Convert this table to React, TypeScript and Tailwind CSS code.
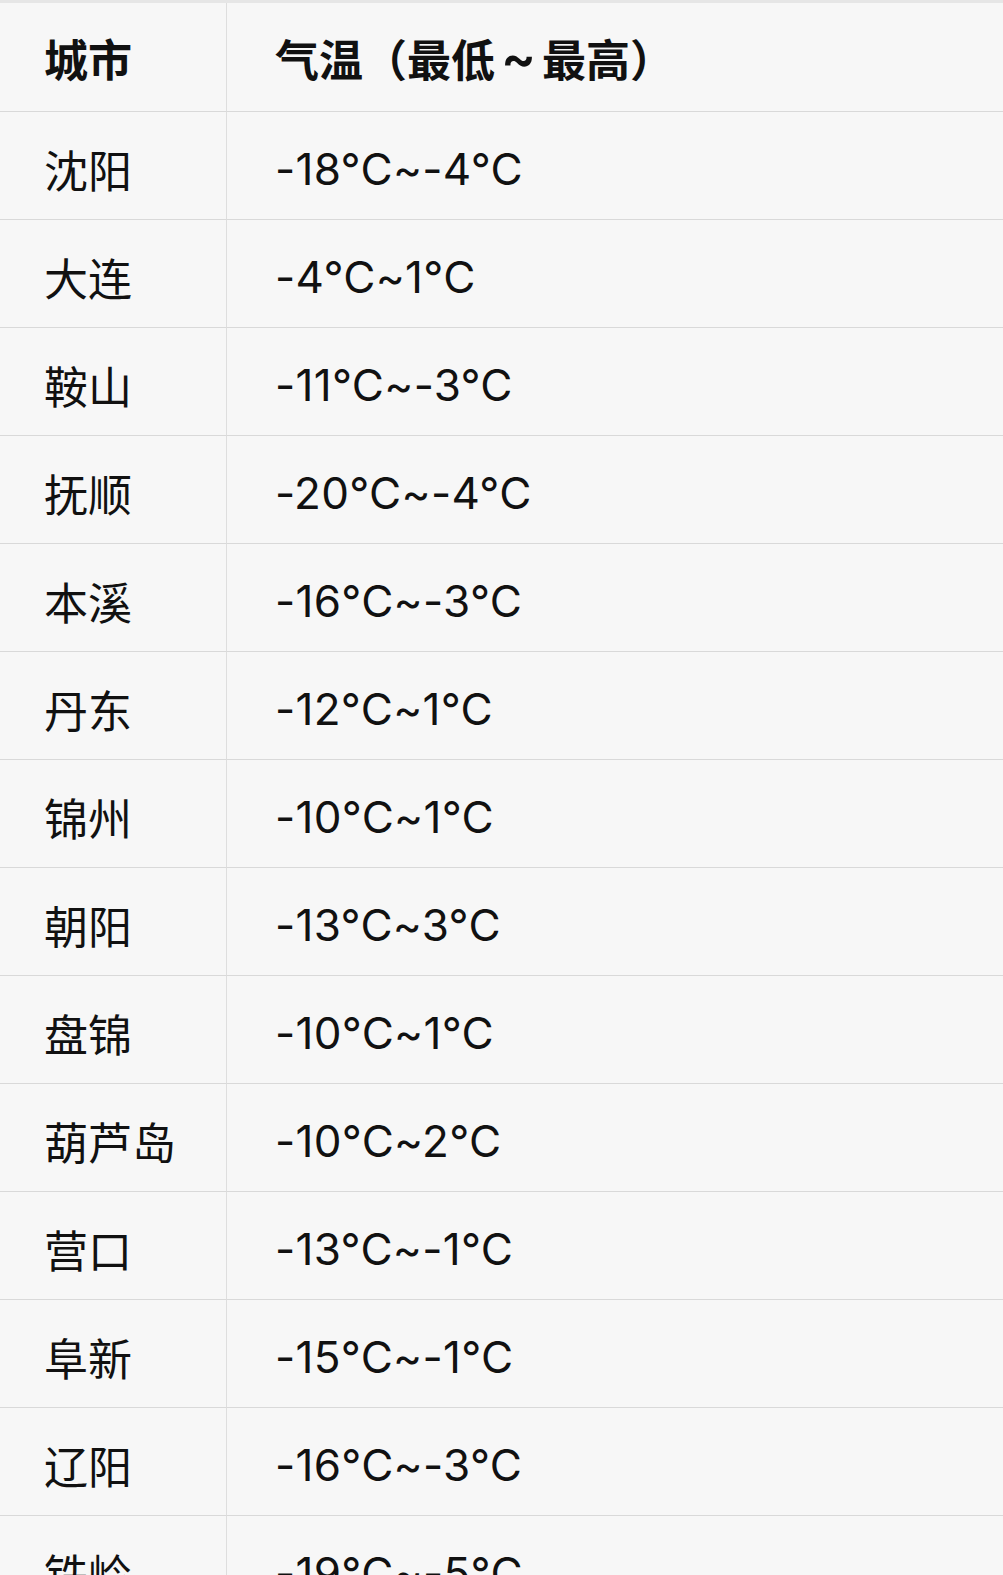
import React from "react"

type Row = { city: string; temp: string }

const rows: Row[] = [
  { city: "沈阳", temp: "-18°C~-4°C" },
  { city: "大连", temp: "-4°C~1°C" },
  { city: "鞍山", temp: "-11°C~-3°C" },
  { city: "抚顺", temp: "-20°C~-4°C" },
  { city: "本溪", temp: "-16°C~-3°C" },
  { city: "丹东", temp: "-12°C~1°C" },
  { city: "锦州", temp: "-10°C~1°C" },
  { city: "朝阳", temp: "-13°C~3°C" },
  { city: "盘锦", temp: "-10°C~1°C" },
  { city: "葫芦岛", temp: "-10°C~2°C" },
  { city: "营口", temp: "-13°C~-1°C" },
  { city: "阜新", temp: "-15°C~-1°C" },
  { city: "辽阳", temp: "-16°C~-3°C" },
  { city: "铁岭", temp: "-19°C~-5°C" },
]

const cjk = { fontFamily: '"Noto Sans CJK SC", sans-serif' }
const latin = { fontFamily: 'Inter, "Noto Sans CJK SC", sans-serif' }

function Cell({
  children,
  first,
  head,
}: {
  children: React.ReactNode
  first?: boolean
  head?: boolean
}) {
  return (
    <div
      className={`flex items-center border-b border-[#d9d9d9] text-[44px] leading-none text-[#111] ${
        first ? "border-r border-r-[#dedede] pl-[44px]" : "pl-[48px]"
      } ${head ? "h-[109px] font-bold" : "h-[108px] font-normal"}`}
    >
      {children}
    </div>
  )
}

export default function App() {
  return (
    <div className="h-[1575px] w-full overflow-hidden bg-[#f7f7f7]" style={cjk}>
      <div className="h-[3px] bg-[#e6e6e6]" />
      <div className="grid grid-cols-[227px_1fr]">
        <Cell first head>
          <span className="pt-[2px]">城市</span>
        </Cell>
        <Cell head>
          <span className="flex items-center pt-[2px]">
            气温（最低
            <span className="px-[6px] text-[52px] font-semibold" style={latin}>
              ~
            </span>
            最高）
          </span>
        </Cell>
        {rows.map((r) => (
          <React.Fragment key={r.city}>
            <Cell first>
              <span className="pt-[6px]">{r.city}</span>
            </Cell>
            <Cell>
              <span className="pt-[6px] tracking-[0.3px]" style={latin}>
                {r.temp}
              </span>
            </Cell>
          </React.Fragment>
        ))}
      </div>
    </div>
  )
}
